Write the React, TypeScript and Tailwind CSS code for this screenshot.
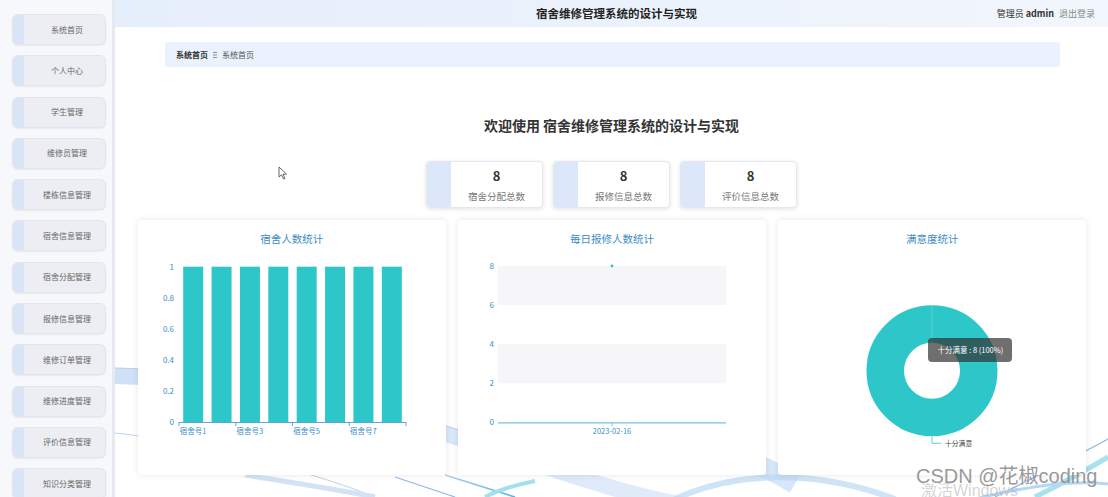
import React from "react";

const menu = [
  "系统首页",
  "个人中心",
  "学生管理",
  "维修员管理",
  "楼栋信息管理",
  "宿舍信息管理",
  "宿舍分配管理",
  "报修信息管理",
  "维修订单管理",
  "维修进度管理",
  "评价信息管理",
  "知识分类管理",
];

const stats = ["宿舍分配总数", "报修信息总数", "评价信息总数"];

const AXIS = "#3a8ec6";
const TEAL = "#2ec7c9";

function BarChart() {
  const x0 = 41;
  const x1 = 268;
  const y0 = 176;
  const h = 155.3;
  const cw = (x1 - x0) / 8;
  const ys = [0, 0.2, 0.4, 0.6, 0.8, 1];
  return (
    <svg width="307" height="229" className="block">
      {ys.map((v) => {
        const y = y0 - v * h;
        return (
          <text key={v} x={36} y={y + 3} textAnchor="end" fontSize="8" fill={AXIS}>
            {v}
          </text>
        );
      })}
      {Array.from({ length: 8 }).map((_, i) => (
        <rect key={i} x={x0 + i * cw + (cw - 20) / 2} y={y0 - h} width={20} height={h} fill={TEAL} />
      ))}
      <line x1={x0} y1={y0 + 0.5} x2={x1} y2={y0 + 0.5} stroke="#5aa7d8" strokeWidth="1" />
      {[0, 1, 2, 3, 4].map((k) => (
        <line key={k} x1={x0 + 2 * k * cw} y1={y0} x2={x0 + 2 * k * cw} y2={y0 + 4} stroke="#5aa7d8" strokeWidth="1" />
      ))}
      {[0, 1, 2, 3].map((k) => (
        <text key={k} x={x0 + 2 * k * cw + cw / 2} y={y0 + 12} textAnchor="middle" fontSize="7.5" fill={AXIS}>
          {`宿舍号${2 * k + 1}`}
        </text>
      ))}
    </svg>
  );
}

function LineChart() {
  const x0 = 40;
  const x1 = 268;
  const y0 = 176.3;
  const step = 39.07;
  return (
    <svg width="307" height="229" className="block">
      <rect x={x0} y={y0 - 4 * step} width={x1 - x0} height={step} fill="#f6f6f8" />
      <rect x={x0} y={y0 - 2 * step} width={x1 - x0} height={step} fill="#f6f6f8" />
      {[0, 2, 4, 6, 8].map((v, i) => (
        <text key={v} x={36} y={y0 - i * step + 3} textAnchor="end" fontSize="8" fill={AXIS}>
          {v}
        </text>
      ))}
      <line x1={x0} y1={y0 + 0.5} x2={x1} y2={y0 + 0.5} stroke="#7dbfe3" strokeWidth="1.2" />
      <line x1={154} y1={y0} x2={154} y2={y0 + 4} stroke="#7dbfe3" strokeWidth="1" />
      <text x={154} y={y0 + 12} textAnchor="middle" fontSize="7.5" fill={AXIS}>
        2023-02-16
      </text>
      <circle cx={154} cy={y0 - 4 * step} r={1.4} fill={TEAL} />
    </svg>
  );
}

function PieChart() {
  const cx = 154;
  const cy = 124.8;
  return (
    <svg width="307" height="229" className="block">
      <circle cx={cx} cy={cy} r={46.75} fill="none" stroke={TEAL} strokeWidth={37.5} />
      <line x1={cx} y1={cy - 65.5} x2={cx} y2={cy - 28} stroke="#7fd8d9" strokeWidth="0.6" />
      <polyline points={`${cx},${cy + 66} ${cx},${cy + 72.5} ${cx + 9},${cy + 72.5}`} fill="none" stroke={TEAL} strokeWidth="0.8" />
      <text x={cx + 13} y={cy + 75} fontSize="6.8" fill="#444">
        十分满意
      </text>
    </svg>
  );
}

function Waves() {
  return (
    <svg width="993" height="150" className="absolute left-0 bottom-0 pointer-events-none">
      <defs>
        <linearGradient id="wg1" x1="0" y1="0" x2="1" y2="0">
          <stop offset="0" stopColor="#cfe0f7" />
          <stop offset="1" stopColor="#e6effb" />
        </linearGradient>
        <linearGradient id="wg2" x1="0" y1="0" x2="1" y2="1">
          <stop offset="0" stopColor="#a9d2f1" />
          <stop offset="1" stopColor="#5bb3e4" />
        </linearGradient>
      </defs>
      <path d="M0,29 C120,31 260,60 420,116 S620,164 700,164" stroke="url(#wg1)" strokeWidth="16" fill="none" />
      <path d="M0,21 C120,23 260,52 420,108" stroke="#b4cdf2" strokeWidth="1" fill="none" />
      <path d="M0,86 C60,92 180,118 260,150" stroke="#bcd2f1" strokeWidth="1" fill="none" />
      <path d="M130,128 C180,136 220,142 260,150" stroke="#d3e3f6" strokeWidth="5" fill="none" />
      <path d="M280,130 L340,150" stroke="#8dbbe9" strokeWidth="1.2" fill="none" />
      <path d="M330,128 L400,150" stroke="url(#wg2)" strokeWidth="1.6" fill="none" />
      <path d="M370,150 C385,142 400,138 420,134" stroke="#a2e0ec" strokeWidth="4" fill="none" />
      <path d="M560,92 C600,102 640,112 680,137" stroke="#c6dcf5" strokeWidth="20" fill="none" opacity="0.7" />
      <path d="M560,152 C620,124 700,122 780,152" stroke="#bcd8f3" strokeWidth="6" fill="none" opacity="0.7" />
      <path d="M993,92 C960,110 920,130 880,150" stroke="#8dbbe9" strokeWidth="1.2" fill="none" />
      <path d="M993,110 C970,124 940,140 920,150" stroke="#a8e2ee" strokeWidth="5" fill="none" />
      <path d="M860,152 C900,142 950,132 993,137" stroke="#b5d7f3" strokeWidth="3" fill="none" />
    </svg>
  );
}

export default function App() {
  return (
    <div className="relative w-[1108px] h-[497px] overflow-hidden flex bg-white font-['Noto_Sans_CJK_SC','Liberation_Sans',sans-serif]">
      {/* Sidebar */}
      <aside className="w-[115px] shrink-0 h-full bg-[#f6f8fb] border-r-[3px] border-[#e6e9ef] pt-[14px] pl-[12px] flex flex-col gap-[10.3px]">
        {menu.map((m) => (
          <div
            key={m}
            className="shrink-0 w-[94px] h-[31px] flex rounded-[6px] bg-[#eceef3] border border-[#e2e5eb] shadow-[0_1px_2px_rgba(0,0,0,0.06)] overflow-hidden"
          >
            <div className="w-[11px] h-full bg-[#d9e5f7]" />
            <div className="flex-1 flex items-center justify-center pl-[5px] text-[8px] text-[#666] leading-none">
              {m}
            </div>
          </div>
        ))}
      </aside>

      {/* Main */}
      <div className="relative flex-1 flex flex-col">
        <Waves />

        <header className="relative z-10 h-[27px] shrink-0 flex items-center bg-gradient-to-r from-[#e5eefb] to-[#f2f6fd]">
          <div className="flex-1 text-center text-[11.5px] font-bold text-[#222] pl-[10px]">宿舍维修管理系统的设计与实现</div>
          <div className="absolute right-[13px] top-0 h-full flex items-center gap-[5px] text-[9px]">
            <span className="text-[#333]">
              管理员 <span className="font-bold">admin</span>
            </span>
            <span className="text-[#888]">退出登录</span>
          </div>
        </header>

        <div className="relative z-10 mt-[15px] ml-[50px] mr-[48px] h-[25px] bg-[#e9f2fd] rounded-[2px] flex items-center pl-[11px] gap-[4px] text-[8px] leading-none">
          <span className="text-[#333] font-bold">系统首页</span>
          <svg width="4" height="6" className="mx-[1px]">
            <line x1="0" y1="0.5" x2="4" y2="0.5" stroke="#777" strokeWidth="0.8" />
            <line x1="0" y1="3" x2="4" y2="3" stroke="#777" strokeWidth="0.8" />
            <line x1="0" y1="5.5" x2="4" y2="5.5" stroke="#777" strokeWidth="0.8" />
          </svg>
          <span className="text-[#555]">系统首页</span>
        </div>

        <h1 className="relative z-10 mt-[48px] h-[20px] leading-[20px] text-center text-[14px] font-bold text-[#333]">
          欢迎使用 宿舍维修管理系统的设计与实现
        </h1>

        <div className="relative z-10 mt-[26px] flex justify-center gap-[10px]">
          {stats.map((s) => (
            <div
              key={s}
              className="w-[117px] h-[47px] flex rounded-[4px] bg-white border border-[#e6e8ee] shadow-[0_1px_4px_rgba(0,0,0,0.12)] overflow-hidden"
            >
              <div className="w-[24px] h-full bg-[#dce8f9]" />
              <div className="flex-1 flex flex-col items-center pt-[6px]">
                <div className="text-[13px] leading-[16px] font-bold text-[#333]">8</div>
                <div className="mt-[6px] text-[9.5px] leading-[12px] text-[#777]">{s}</div>
              </div>
            </div>
          ))}
        </div>

        <div className="relative z-10 mt-[12px] pl-[23px] pr-[22px] flex gap-[12.5px]">
          <div className="flex-1 h-[255px] bg-white rounded-[4px] shadow-[0_0_6px_rgba(0,0,0,0.1)] pt-[12px] overflow-hidden">
            <div className="h-[14px] leading-[14px] text-center text-[10.5px] text-[#3c8dc4]">宿舍人数统计</div>
            <BarChart />
          </div>
          <div className="flex-1 h-[255px] bg-white rounded-[4px] shadow-[0_0_6px_rgba(0,0,0,0.1)] pt-[12px] overflow-hidden">
            <div className="h-[14px] leading-[14px] text-center text-[10.5px] text-[#3c8dc4]">每日报修人数统计</div>
            <LineChart />
          </div>
          <div className="relative flex-1 h-[255px] bg-white rounded-[4px] shadow-[0_0_6px_rgba(0,0,0,0.1)] pt-[12px] overflow-hidden">
            <div className="h-[14px] leading-[14px] text-center text-[10.5px] text-[#3c8dc4]">满意度统计</div>
            <PieChart />
            <div className="absolute left-[150px] top-[118px] w-[84px] h-[24px] rounded-[4px] bg-[rgba(50,50,50,0.7)] flex items-center justify-center text-[7.5px] text-white whitespace-nowrap">
              十分满意 : 8 (100%)
            </div>
          </div>
        </div>
      </div>

      {/* cursor */}
      <svg width="10" height="14" viewBox="0 0 10 14" className="absolute z-20 left-[278px] top-[166px]">
        <path d="M1,1 L1,11 L3.5,8.8 L5.5,13 L7,12.3 L5,8.2 L8.5,8.2 Z" fill="#fff" stroke="#555" strokeWidth="0.9" strokeLinejoin="round" />
      </svg>

      {/* watermarks */}
      <div className="absolute z-20 left-[921px] top-[481px] text-[16px] leading-[20px] text-[rgba(160,160,160,0.45)] font-['Liberation_Sans','Noto_Sans_CJK_SC',sans-serif] whitespace-nowrap">
        激活Windows
      </div>
      <div className="absolute z-20 left-[916px] top-[464px] text-[20px] leading-[24px] text-[rgba(140,140,140,0.9)] font-['Liberation_Sans','Noto_Sans_CJK_SC',sans-serif] whitespace-nowrap">
        CSDN @花椒coding
      </div>
    </div>
  );
}
